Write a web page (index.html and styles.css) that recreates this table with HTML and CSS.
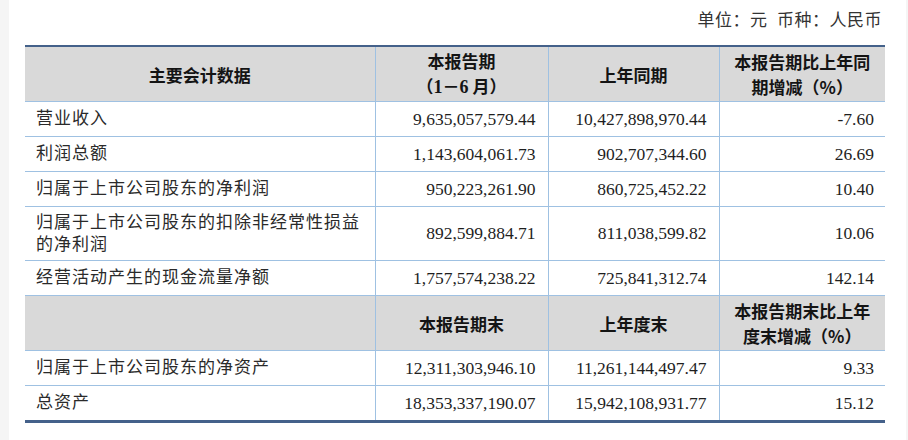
FILE: index.html
```html
<!DOCTYPE html>
<html lang="zh-CN">
<head>
<meta charset="utf-8">
<title>主要会计数据</title>
<link rel="stylesheet" href="styles.css">
</head>
<body>
<div class="page">
  <div class="unit">单位：元&nbsp; 币种：人民币</div>
  <table class="data">
    <colgroup>
      <col class="c1"><col class="c2"><col class="c3"><col class="c4">
    </colgroup>
    <tr class="head">
      <th>主要会计数据</th>
      <th>本报告期<br><span class="paren">（<b class="num">1</b>－<b class="num">6</b> 月）</span></th>
      <th>上年同期</th>
      <th>本报告期比上年同<br>期增减（%）</th>
    </tr>
    <tr class="row"><td class="label">营业收入</td><td class="n">9,635,057,579.44</td><td class="n">10,427,898,970.44</td><td class="n last">-7.60</td></tr>
    <tr class="row"><td class="label">利润总额</td><td class="n">1,143,604,061.73</td><td class="n">902,707,344.60</td><td class="n last">26.69</td></tr>
    <tr class="row"><td class="label">归属于上市公司股东的净利润</td><td class="n">950,223,261.90</td><td class="n">860,725,452.22</td><td class="n last">10.40</td></tr>
    <tr class="row tall"><td class="label two">归属于上市公司股东的扣除非经常性损益<br>的净利润</td><td class="n">892,599,884.71</td><td class="n">811,038,599.82</td><td class="n last">10.06</td></tr>
    <tr class="row"><td class="label">经营活动产生的现金流量净额</td><td class="n">1,757,574,238.22</td><td class="n">725,841,312.74</td><td class="n last">142.14</td></tr>
    <tr class="head">
      <th></th>
      <th>本报告期末</th>
      <th>上年度末</th>
      <th>本报告期末比上年<br>度末增减（%）</th>
    </tr>
    <tr class="row"><td class="label">归属于上市公司股东的净资产</td><td class="n">12,311,303,946.10</td><td class="n">11,261,144,497.47</td><td class="n last">9.33</td></tr>
    <tr class="row end"><td class="label">总资产</td><td class="n">18,353,337,190.07</td><td class="n">15,942,108,931.77</td><td class="n last">15.12</td></tr>
  </table>
</div>
</body>
</html>
```

FILE: styles.css
```css
html, body {
  margin: 0;
  padding: 0;
  background: #f5f5f5;
}
body {
  font-family: "Liberation Serif", "Noto Sans CJK SC", serif;
  color: #222;
}
.page {
  margin-left: 9px;
  width: 897px;
  height: 440px;
  background: #fff;
  padding-top: 10px;
  box-sizing: border-box;
}
.unit {
  width: 873px;
  text-align: right;
  font-size: 17px;
  line-height: 22px;
  letter-spacing: 0.5px;
  color: #333;
  margin-bottom: 13px;
}
.data {
  margin-left: 16px;
  width: 860px;
  border-collapse: collapse;
  table-layout: fixed;
  border-top: 2px solid #44618a;
  border-bottom: 3px solid #44618a;
}
.c1 { width: 350px; }
.c2 { width: 173px; }
.c3 { width: 171px; }
.c4 { width: 166px; }
.data th, .data td {
  border-left: 1px solid #9fc1e2;
  border-right: 1px solid #9fc1e2;
  border-top: 1px solid #9fc1e2;
  padding: 0;
}
.data th:first-child, .data td:first-child { border-left: none; }
.data th:last-child, .data td:last-child { border-right: none; }
.head th {
  background: #d9d9d9;
  font-family: "Noto Sans CJK SC", sans-serif;
  font-weight: 700;
  font-size: 17px;
  line-height: 25px;
  color: #141414;
  text-align: center;
  height: 54px;
}
.head .num {
  font-family: "Liberation Serif", serif;
  font-weight: 700;
  font-size: 18px;
}
.row td {
  height: 34px;
  font-size: 17.5px;
  color: #1e1e1e;
}
.row.tall td { height: 53px; }
.row td.label {
  padding-left: 11px;
  font-size: 17px;
  letter-spacing: 1px;
  line-height: 22px;
  color: #2a2a2a;
}
.row td.n {
  text-align: right;
  padding-right: 12px;
}
.row td.last { padding-right: 11px; }
```
